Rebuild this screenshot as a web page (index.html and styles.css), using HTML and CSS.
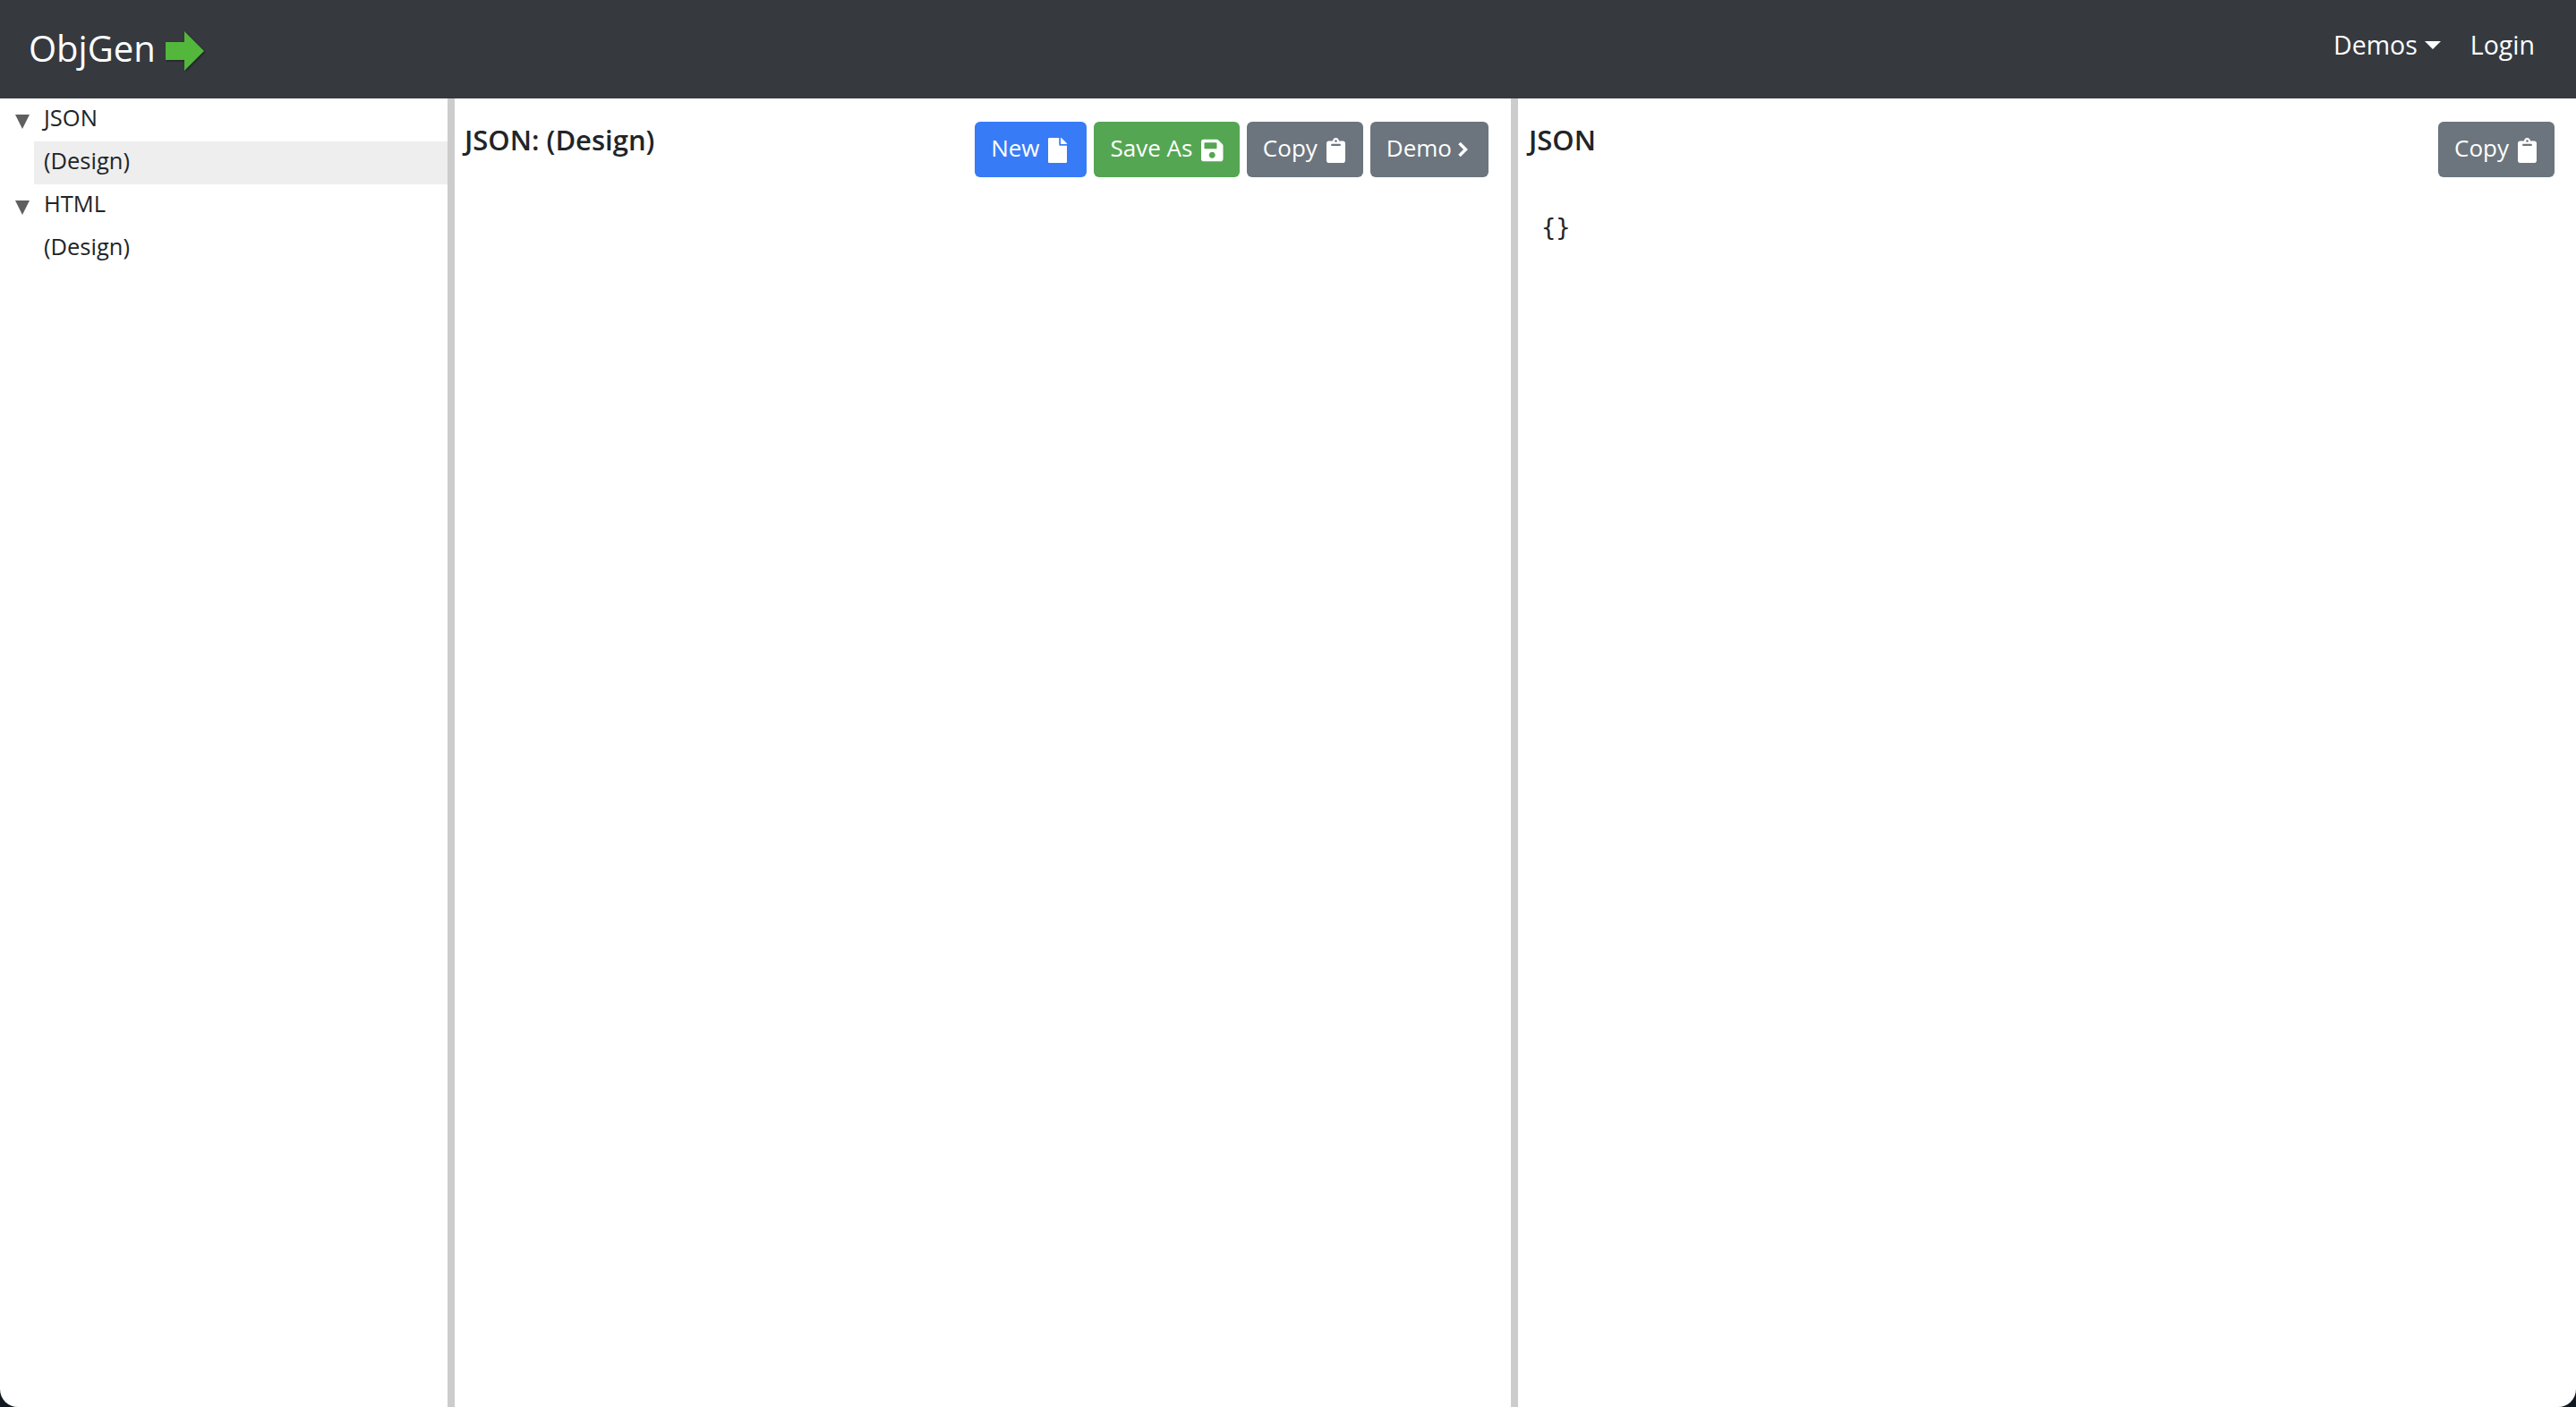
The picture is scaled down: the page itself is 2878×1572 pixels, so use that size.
FILE: index.html
```html
<!DOCTYPE html>
<html lang="en">
<head>
<meta charset="utf-8">
<title>ObjGen</title>
<link rel="stylesheet" href="styles.css">
</head>
<body>
<div class="app">
  <nav class="navbar">
    <a class="brand">ObjGen
      <svg class="brand-arrow" width="46" height="46" viewBox="0 0 46 46"><path class="arrow-fill" d="M1 12H22V0L44 22 22 44V32H1Z"/></svg>
    </a>
    <div class="nav-links">
      <a class="nav-link">Demos<span class="caret"></span></a>
      <a class="nav-link">Login</a>
    </div>
  </nav>
  <main class="panes">
    <aside class="tree">
      <div class="tree-row"><span class="twisty"></span><span class="tree-label">JSON</span></div>
      <div class="tree-row child selected"><span class="tree-label">(Design)</span></div>
      <div class="tree-row"><span class="twisty"></span><span class="tree-label">HTML</span></div>
      <div class="tree-row child"><span class="tree-label">(Design)</span></div>
    </aside>
    <section class="pane editor">
      <header class="pane-head">
        <h2 class="pane-title">JSON: (Design)</h2>
        <div class="actions">
          <button class="btn blue">New
            <svg class="icon" viewBox="0 0 384 512"><path d="M224 136V0H24C10.700 0 0 10.700 0 24v464c0 13.300 10.700 24 24 24h336c13.300 0 24-10.700 24-24V160H248c-13.200 0-24-10.800-24-24zm160-14.100v6.100H256V0h6.100c6.400 0 12.500 2.500 17 7l97.900 98c4.500 4.500 7 10.600 7 16.900z"/></svg>
          </button>
          <button class="btn green">Save As
            <svg class="icon" viewBox="0 0 448 512"><path d="M433.900 129.900l-83.900-83.900A48 48 0 0 0 316.100 32H48C21.500 32 0 53.500 0 80v352c0 26.500 21.500 48 48 48h352c26.500 0 48-21.500 48-48V163.900a48 48 0 0 0-14.100-34zM224 416c-35.300 0-64-28.700-64-64 0-35.300 28.700-64 64-64s64 28.700 64 64c0 35.300-28.700 64-64 64zm96-304.500V212c0 6.600-5.400 12-12 12H76c-6.600 0-12-5.400-12-12V108c0-6.600 5.400-12 12-12h228.500c3.200 0 6.200 1.300 8.500 3.500l3.500 3.500c2.200 2.300 3.500 5.300 3.500 8.500z"/></svg>
          </button>
          <button class="btn gray">Copy
            <svg class="icon" viewBox="0 0 384 512"><path d="M384 112v352c0 26.500-21.500 48-48 48H48c-26.500 0-48-21.500-48-48V112c0-26.500 21.500-48 48-48h80c0-35.300 28.700-64 64-64s64 28.700 64 64h80c26.500 0 48 21.500 48 48zM192 40c-13.300 0-24 10.700-24 24s10.700 24 24 24 24-10.700 24-24-10.700-24-24-24m96 114v-20c0-6.600-5.400-12-12-12H108c-6.600 0-12 5.400-12 12v20c0 6.600 5.400 12 12 12h168c6.600 0 12-5.400 12-12z"/></svg>
          </button>
          <button class="btn gray demo">Demo
            <svg class="chevron" viewBox="0 0 12 18"><path d="M2.500 2L9.500 9L2.500 16"/></svg>
          </button>
        </div>
      </header>
    </section>
    <section class="pane output">
      <header class="pane-head">
        <h2 class="pane-title">JSON</h2>
        <div class="actions">
          <button class="btn gray">Copy
            <svg class="icon" viewBox="0 0 384 512"><path d="M384 112v352c0 26.500-21.500 48-48 48H48c-26.500 0-48-21.500-48-48V112c0-26.500 21.500-48 48-48h80c0-35.300 28.700-64 64-64s64 28.700 64 64h80c26.500 0 48 21.500 48 48zM192 40c-13.300 0-24 10.700-24 24s10.700 24 24 24 24-10.700 24-24-10.700-24-24-24m96 114v-20c0-6.600-5.400-12-12-12H108c-6.600 0-12 5.400-12 12v20c0 6.600 5.400 12 12 12h168c6.600 0 12-5.400 12-12z"/></svg>
          </button>
        </div>
      </header>
      <pre class="code">{}</pre>
    </section>
  </main>
</div>
</body>
</html>
```
FILE: styles.css
```css
* { box-sizing: border-box; }
html { height: 100%; background: #111820; }
body {
  margin: 0;
  height: 100%;
  font-family: "Open Sans", "Noto Sans", sans-serif;
  color: #212529;
  overflow: hidden;
}
.app {
  height: 100%;
  display: flex;
  flex-direction: column;
  background: #fff;
  border-radius: 0 0 20px 20px;
  overflow: hidden;
}
.navbar {
  flex: 0 0 110px;
  background: #363a3f;
  display: flex;
  align-items: center;
  justify-content: space-between;
  padding: 0 46px 0 32px;
  color: #fff;
}
.brand {
  display: flex;
  align-items: center;
  gap: 10px;
  font-size: 40px;
  line-height: 1;
  margin-bottom: 2px;
}
.brand-arrow {
  flex: none;
  margin-top: 8px;
  filter: drop-shadow(1px 1px 1px rgba(0, 0, 0, .5));
}
.arrow-fill { fill: #53b73c; }
.nav-links {
  display: flex;
  gap: 33px;
  margin-bottom: 10px;
  font-size: 28.500px;
}
.nav-link { display: flex; align-items: center; }
.caret {
  margin-left: 8px;
  border-top: 9px solid #fff;
  border-left: 9px solid transparent;
  border-right: 9px solid transparent;
}
.panes { flex: 1; display: flex; min-height: 0; }
.tree {
  flex: 0 0 508px;
  border-right: 8px solid #ccc;
  font-size: 25.500px;
}
.tree-row {
  height: 48px;
  display: flex;
  align-items: center;
  padding-left: 17px;
}
.tree-row.child { margin-left: 38px; padding-left: 11px; }
.selected { background: #eee; }
.twisty {
  width: 16px;
  margin-right: 16px;
  margin-top: 4px;
  border-top: 16px solid #5f5f5f;
  border-left: 8px solid transparent;
  border-right: 8px solid transparent;
}
.tree-label { line-height: 1; margin-top: -5px; }
.pane { min-width: 0; }
.editor {
  flex: 0 0 1188px;
  border-right: 8px solid #ccc;
  padding: 0 25px 0 11px;
}
.output { flex: 1; padding: 0 24px 0 12px; }
.pane-head {
  display: flex;
  justify-content: space-between;
  align-items: flex-start;
  padding-top: 26px;
}
.pane-title {
  margin: 0;
  font-size: 31px;
  font-weight: 600;
  line-height: 40px;
}
.actions { display: flex; gap: 8px; }
.btn {
  height: 62px;
  padding: 0 20px 5px 18px;
  border: 0;
  border-radius: 6px;
  color: #fff;
  font: inherit;
  font-size: 26px;
  display: flex;
  align-items: center;
  gap: 10px;
}
.blue { background: #377cf6; padding-right: 22px; }
.green { background: #55a653; padding-right: 18px; }
.gray { background: #6c757d; }
.icon { height: 28px; width: auto; fill: #fff; margin-top: 6px; flex: none; }
.demo { gap: 6px; padding-right: 23px; }
.chevron {
  width: 12px;
  height: 18px;
  margin-top: 5px;
  fill: none;
  stroke: #fff;
  stroke-width: 3.500px;
  flex: none;
}
.code {
  margin: 38px 0 0 14px;
  font-family: "DejaVu Sans Mono", monospace;
  font-size: 27px;
  line-height: 36px;
}
```
